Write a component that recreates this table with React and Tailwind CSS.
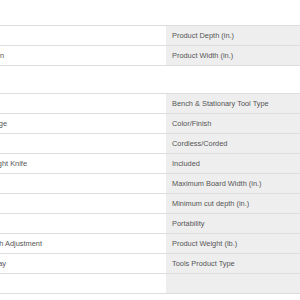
import React from "react";

const table1 = [
  { value: "", end: "", label: "Product Depth (in.)" },
  { value: "Plastic Bin", end: "w-[4px]", label: "Product Width (in.)" },
];

const table2 = [
  { value: "", end: "", label: "Bench & Stationary Tool Type" },
  { value: "Orange", end: "w-[7px]", label: "Color/Finish" },
  { value: "", end: "", label: "Cordless/Corded" },
  { value: "Straight Knife", end: "w-[27px]", label: "Included" },
  { value: "", end: "", label: "Maximum Board Width (in.)" },
  { value: "", end: "", label: "Minimum cut depth (in.)" },
  { value: "", end: "", label: "Portability" },
  { value: "Depth Adjustment", end: "w-[42px]", label: "Product Weight (lb.)" },
  { value: "Tray", end: "w-[6px]", label: "Tools Product Type" },
  { value: "", end: "", label: "" },
];

function Row({ value, end, label }) {
  return (
    <div className="flex h-5 border-b border-[#dddddd]">
      <div className="w-[166px] shrink-0 flex items-center bg-white">
        {value ? (
          <div className={`${end} flex justify-end whitespace-nowrap`}>{value}</div>
        ) : null}
      </div>
      <div className="flex-1 flex items-center bg-[#eeeeee] pl-[6px] whitespace-nowrap">
        {label}
      </div>
    </div>
  );
}

export default function App() {
  return (
    <div
      className="w-[300px] h-[300px] bg-white overflow-hidden text-[7.4px] text-[#555555]"
      style={{ fontFamily: '"Liberation Sans", Arial, sans-serif' }}
    >
      <div className="h-[25px]" />
      <div className="border-t border-[#dddddd]">
        {table1.map((r, i) => (
          <Row key={i} {...r} />
        ))}
      </div>
      <div className="mt-[27px] border-t border-[#dddddd]">
        {table2.map((r, i) => (
          <Row key={i} {...r} />
        ))}
      </div>
    </div>
  );
}
